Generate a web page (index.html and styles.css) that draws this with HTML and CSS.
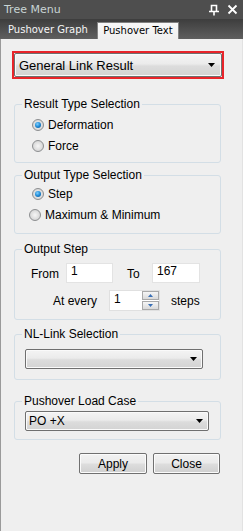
FILE: index.html
```html
<!DOCTYPE html>
<html>
<head>
<meta charset="utf-8">
<link rel="stylesheet" href="styles.css">
</head>
<body>
<div class="panel">
  <div class="titlebar">
    <span class="title">Tree Menu</span>
    <div class="title-icons">
      <svg width="12" height="12" viewBox="0 0 12 12"><path d="M3.5 1.5h5v6h-5z M1 7.5h10 M6 7.5v4" fill="none" stroke="#fff" stroke-width="1.6"/></svg>
      <svg width="11" height="11" viewBox="0 0 11 11"><path d="M1.5 1.5l8 8 M9.5 1.5l-8 8" stroke="#fff" stroke-width="1.8"/></svg>
    </div>
  </div>
  <div class="tabs">
    <div class="tab">Pushover Graph</div>
    <div class="tab active">Pushover Text</div>
  </div>
  <div class="content">
    <div class="highlight">
      <div class="combo combo-main">
        <span class="combo-text">General Link Result</span>
        <svg class="arrow" width="7" height="4" viewBox="0 0 7 4"><path d="M0 0h7L3.5 4z" fill="#000"/></svg>
      </div>
    </div>

    <fieldset class="group g-result">
      <legend>Result Type Selection</legend>
      <div class="radio-row"><span class="radio checked"></span><span>Deformation</span></div>
      <div class="radio-row"><span class="radio"></span><span>Force</span></div>
    </fieldset>

    <fieldset class="group g-output">
      <legend>Output Type Selection</legend>
      <div class="radio-row"><span class="radio checked"></span><span>Step</span></div>
      <div class="radio-row shift"><span class="radio"></span><span>Maximum &amp; Minimum</span></div>
    </fieldset>

    <fieldset class="group g-step">
      <legend>Output Step</legend>
      <div class="step-row">
        <span class="lbl-from">From</span>
        <div class="field f-from">1</div>
        <span class="lbl-to">To</span>
        <div class="field f-to">167</div>
      </div>
      <div class="step-row row2">
        <span class="lbl-every">At every</span>
        <div class="spin">
          <div class="spin-field">1</div>
          <div class="spin-btns">
            <div class="spin-btn"><svg width="5" height="3" viewBox="0 0 5 3"><path d="M0 3h5L2.5 0z" fill="#3a6fb5"/></svg></div>
            <div class="spin-btn"><svg width="5" height="3" viewBox="0 0 5 3"><path d="M0 0h5L2.5 3z" fill="#3a6fb5"/></svg></div>
          </div>
        </div>
        <span class="lbl-steps">steps</span>
      </div>
    </fieldset>

    <fieldset class="group g-nl">
      <legend>NL-Link Selection</legend>
      <div class="combo combo-nl">
        <span class="combo-text"></span>
        <svg class="arrow" width="7" height="4" viewBox="0 0 7 4"><path d="M0 0h7L3.5 4z" fill="#000"/></svg>
      </div>
    </fieldset>

    <fieldset class="group g-load">
      <legend>Pushover Load Case</legend>
      <div class="combo combo-load">
        <span class="combo-text">PO +X</span>
        <svg class="arrow" width="7" height="4" viewBox="0 0 7 4"><path d="M0 0h7L3.5 4z" fill="#000"/></svg>
      </div>
    </fieldset>

    <div class="buttons">
      <button class="btn btn-apply">Apply</button>
      <button class="btn btn-close">Close</button>
    </div>
  </div>
</div>
</body>
</html>
```

FILE: styles.css
```css
* { box-sizing: border-box; }
html, body { margin: 0; padding: 0; }
body {
  width: 243px;
  height: 531px;
  overflow: hidden;
  font-family: "Liberation Sans", Arial, sans-serif;
  font-size: 12px;
  color: #000;
  background: #efefef;
}
.panel {
  display: flex;
  flex-direction: column;
  height: 531px;
}
.titlebar {
  height: 19px;
  background: #4e4e4e;
  display: flex;
  align-items: center;
  justify-content: space-between;
  padding: 0 5px 0 4px;
}
.title {
  font-family: "DejaVu Sans", sans-serif;
  font-size: 11px;
  color: #c8d4d4;
}
.title-icons {
  display: flex;
  align-items: center;
  gap: 7px;
}
.tabs {
  height: 20px;
  background: linear-gradient(#3d3d3d, #5f5f5f);
  display: flex;
  align-items: flex-end;
  padding-left: 2px;
}
.tab {
  font-family: "DejaVu Sans", sans-serif;
  font-size: 10px;
  color: #f6f6f6;
  height: 17px;
  line-height: 16px;
  padding: 0 6px;
  white-space: nowrap;
}
.tab.active {
  margin-left: 3px;
  color: #000;
  background: linear-gradient(#f8f8f8, #efefef);
  border: 1px solid #828282;
  border-bottom: none;
  padding: 0;
  width: 82px;
  text-align: center;
}
.content {
  flex: 1;
  display: flex;
  flex-direction: column;
  border-left: 1px solid #9a9a9a;
  border-right: 1px solid #e2e2e2;
  background: #efefef;
  padding: 12px 0 0 11px;
}
.highlight {
  width: 212px;
  height: 28px;
  border: 2px solid #e8242a;
  padding: 0;
}
.combo {
  display: flex;
  align-items: center;
  justify-content: space-between;
  border: 1px solid #6f6f6f;
  border-radius: 2px;
  background: linear-gradient(#f4f4f4 0%, #ebebeb 45%, #dcdcdc 55%, #d3d3d3 100%);
  box-shadow: inset 0 0 0 1px #fafafa;
}
.combo-main {
  height: 24px;
  width: 208px;
  padding: 0 6px 0 4px;
  font-size: 13px;
}
.arrow { flex: none; }
.combo-text { white-space: nowrap; }

.group {
  margin: 0;
  padding: 0;
  border: 1px solid #d3dee6;
  border-radius: 3px;
  min-width: 0;
  width: 207px;
  margin-left: 2px;
}
.group legend {
  padding: 0 2px;
  margin-left: 7px;
  line-height: 14px;
  height: 14px;
}
.g-result { margin-top: 18px; padding: 3px 0 5px 17px; height: 66px; }
.g-output { margin-top: 5px; padding: 1px 0 6px 17px; height: 66px; }
.g-result legend, .g-output legend { margin-left: -10px; }
.radio-row {
  display: flex;
  align-items: center;
  height: 21px;
  gap: 4px;
}
.radio-row.shift { margin-left: -3px; }
.radio {
  width: 12px;
  height: 12px;
  border-radius: 50%;
  border: 1px solid #8c8e90;
  background: radial-gradient(circle at 50% 50%, #f6f6f6 0%, #dcdcdc 60%, #c8c8c8 100%);
  position: relative;
  flex: none;
}
.radio.checked::after {
  content: "";
  position: absolute;
  left: 2px;
  top: 2px;
  width: 6px;
  height: 6px;
  border-radius: 50%;
  background: radial-gradient(circle at 40% 35%, #7fd0ff 0%, #1f8ad6 50%, #0b4f8c 100%);
}

.g-step { margin-top: 8px; padding: 0 0 0 16px; height: 78px; }
.g-step legend { margin-left: -9px; }
.step-row {
  display: flex;
  align-items: center;
  margin-top: 7px;
  height: 20px;
}
.step-row.row2 { margin-top: 7px; height: 21px; padding-left: 22px; }
.field {
  height: 20px;
  background: #fff;
  border: 1px solid #e3e3e3;
  padding: 0 4px;
  line-height: 14px;
}
.lbl-from { width: 35px; padding-top: 2px; }
.f-from { width: 47px; }
.lbl-to { margin-left: 14px; width: 25px; padding-top: 2px; }
.f-to { width: 48px; }
.lbl-every { width: 56px; }
.spin {
  display: flex;
  width: 51px;
  height: 21px;
  border: 1px solid #e0e0e0;
  background: #fff;
}
.spin-field { flex: 1; padding-left: 4px; line-height: 16px; }
.spin-btns {
  width: 17px;
  display: flex;
  flex-direction: column;
  gap: 1px;
}
.spin-btn {
  flex: 1;
  border: 1px solid #a9a9a9;
  background: linear-gradient(#f6f6f6, #d9d9d9);
  display: flex;
  align-items: center;
  justify-content: center;
}
.lbl-steps { margin-left: 11px; }

.g-nl { margin-top: 7px; padding: 0 0 0 10px; height: 53px; }
.g-nl legend, .g-load legend { margin-left: -3px; }
.combo-nl {
  margin-top: 8px;
  width: 178px;
  height: 20px;
  padding: 0 5px 0 4px;
}
.g-load { margin-top: 14px; padding: 0 0 0 10px; height: 46px; }
.combo-load {
  margin-top: 3px;
  width: 184px;
  height: 20px;
  padding: 0 5px 0 3px;
}
.buttons {
  display: flex;
  justify-content: flex-end;
  gap: 6px;
  width: 208px;
  margin-top: 13px;
}
.btn {
  font-family: "Liberation Sans", Arial, sans-serif;
  font-size: 12px;
  height: 21px;
  padding: 0;
  color: #000;
  border: 1px solid #707070;
  border-radius: 2px;
  background: linear-gradient(#f2f2f2 0%, #ebebeb 45%, #dddddd 55%, #cfcfcf 100%);
  box-shadow: inset 0 0 0 1px #fbfbfb;
}
.btn-apply { width: 68px; }
.btn-close { width: 67px; }
```
